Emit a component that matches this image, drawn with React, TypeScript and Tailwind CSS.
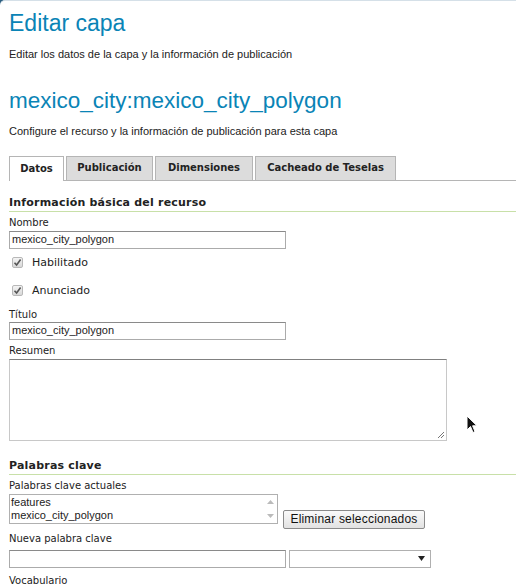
import React from "react";

const dv = { fontFamily: '"DejaVu Sans", sans-serif' };
const ls = { fontFamily: '"Liberation Sans", Arial, sans-serif' };

function Label({ text, h }: { text: string; h: string }) {
  return (
    <div className={"flex items-center pt-[4px] text-[10px] text-[#222] leading-none " + h} style={dv}>
      {text}
    </div>
  );
}

function Check({ text, h }: { text: string; h: string }) {
  return (
    <div className={"flex items-center pt-[4px] " + h}>
      <div className="ml-[3px] w-[11px] h-[11px] rounded-[2px] border border-[#b8b8b8] bg-gradient-to-b from-[#f4f4f4] to-[#d8d8d8] flex items-center justify-center">
        <svg width="9" height="9" viewBox="0 0 9 9">
          <path d="M1.5 4.8 L3.6 7 L7.6 1.6" fill="none" stroke="#555" strokeWidth="1.6" />
        </svg>
      </div>
      <span className="ml-[9px] text-[11px] text-[#222] leading-none" style={dv}>{text}</span>
    </div>
  );
}

function Section({ title, mt }: { title: string; mt: string }) {
  return (
    <div className={"h-[19px] border-b border-[#c8e0a8] flex items-center pt-[2px] " + mt}>
      <div className="text-[11px] leading-none font-bold text-[#222] tracking-[0.2px]" style={dv}>{title}</div>
    </div>
  );
}

function TextInput({ value }: { value?: string }) {
  return (
    <div className="w-[277px] h-[18px] border border-[#ababab] border-t-[#8a8a8a] px-[2px] text-[11px] leading-none text-[#222] flex items-center">
      {value}
    </div>
  );
}

export default function App() {
  return (
    <div className="w-[516px] h-[585px] bg-[#2d5f80] overflow-hidden">
      <div className="w-full h-full bg-white rounded-tl-[5px] border-t border-[#d5e0e8] pl-[9px]" style={ls}>
        <h1 className="text-[23px] text-[#0a84b6] leading-none pt-[11px]">Editar capa</h1>
        <p className="text-[11px] text-[#222] mt-[14px] leading-none">Editar los datos de la capa y la información de publicación</p>
        <h2 className="text-[22.5px] text-[#0a84b6] leading-none mt-[30px]">mexico_city:mexico_city_polygon</h2>
        <p className="text-[11px] text-[#222] mt-[13px] leading-none">Configure el recurso y la información de publicación para esta capa</p>

        <div className="mt-[19px] flex items-end border-b border-[#b5b5b5] h-[25px]" style={dv}>
          <div className="h-[25px] w-[55px] border border-b-0 border-[#b5b5b5] bg-white flex items-center justify-center text-[10px] leading-none font-bold text-[#222] -mb-px">Datos</div>
          <div className="ml-[2px] h-[24px] w-[87px] border border-b-0 border-[#b5b5b5] bg-[#dcdcdc] flex items-center justify-center text-[10px] leading-none font-bold text-[#222]">Publicación</div>
          <div className="ml-[2px] h-[24px] w-[98px] border border-b-0 border-[#b5b5b5] bg-[#dcdcdc] flex items-center justify-center text-[10px] leading-none font-bold text-[#222]">Dimensiones</div>
          <div className="ml-[2px] h-[24px] w-[141px] border border-b-0 border-[#b5b5b5] bg-[#dcdcdc] flex items-center justify-center text-[10px] leading-none font-bold text-[#222]">Cacheado de Teselas</div>
        </div>

        <Section title="Información básica del recurso" mt="mt-[12px]" />

        <Label text="Nombre" h="h-[19px]" />
        <TextInput value="mexico_city_polygon" />

        <Check text="Habilitado" h="h-[24px]" />
        <Check text="Anunciado" h="h-[32px]" />

        <Label text="Título" h="h-[17px]" />
        <TextInput value="mexico_city_polygon" />

        <Label text="Resumen" h="h-[19px]" />
        <div className="flex items-start">
          <div className="w-[438px] h-[82px] border border-[#c8c8c8] border-t-[#808080] relative">
            <svg className="absolute right-[1px] bottom-[1px]" width="9" height="9" viewBox="0 0 9 9">
              <path d="M8 2 L2 8 M8 5 L5 8" stroke="#777" strokeWidth="1" />
            </svg>
          </div>
          <svg className="ml-[19px] mt-[56px]" width="12" height="19" viewBox="0 0 12 19">
            <path d="M1 1 L1 15 L4.5 11.5 L7 17.5 L9 16.6 L6.6 10.8 L11 10.8 Z" fill="#111" stroke="#fff" strokeWidth="1" />
          </svg>
        </div>

        <Section title="Palabras clave" mt="mt-[15px]" />

        <Label text="Palabras clave actuales" h="h-[19px]" />
        <div className="flex items-end">
          <div className="w-[269px] h-[30px] border border-[#b0b0b0] flex">
            <div className="flex-1 text-[11px] text-[#222] leading-[13px] pl-[1px] pt-[1px]">
              <div>features</div>
              <div>mexico_city_polygon</div>
            </div>
            <div className="w-[14px] flex flex-col items-center justify-between py-[5px]">
              <svg width="7" height="4" viewBox="0 0 7 4"><path d="M0 4 L3.5 0 L7 4 Z" fill="#bbb" /></svg>
              <svg width="7" height="4" viewBox="0 0 7 4"><path d="M0 0 L3.5 4 L7 0 Z" fill="#bbb" /></svg>
            </div>
          </div>
          <div className="ml-[5px] -mb-[5px] w-[142px] h-[19px] border border-[#8a8a8a] rounded-[2px] bg-gradient-to-b from-[#fafafa] to-[#e2e2e2] flex items-center justify-center text-[12px] leading-none text-[#111] tracking-[0.2px]">Eliminar seleccionados</div>
        </div>

        <Label text="Nueva palabra clave" h="h-[26px]" />
        <div className="flex">
          <TextInput />
          <div className="ml-[3px] w-[142px] h-[18px] border border-[#b0b0b0] flex items-center justify-end pr-[5px]">
            <svg width="7" height="5" viewBox="0 0 7 5"><path d="M0 0 L3.5 5 L7 0 Z" fill="#222" /></svg>
          </div>
        </div>

        <Label text="Vocabulario" h="h-[22px]" />
      </div>
    </div>
  );
}
